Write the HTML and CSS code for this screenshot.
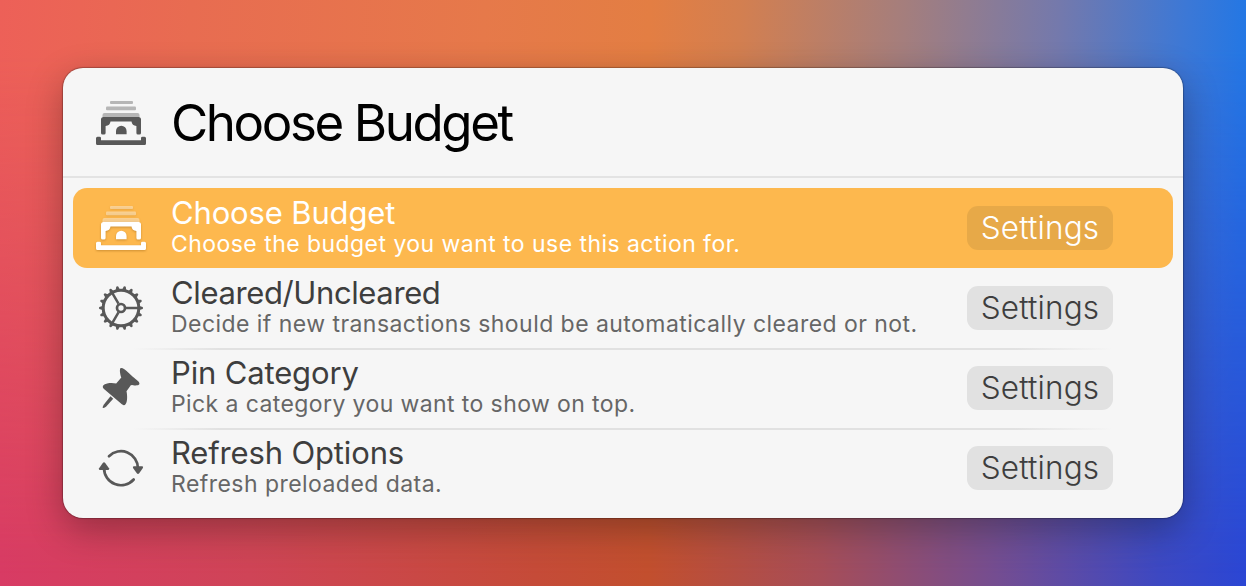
FILE: index.html
```html
<!DOCTYPE html>
<html lang="en">
<head>
<meta charset="utf-8">
<title>Choose Budget</title>
<link rel="stylesheet" href="styles.css">
</head>
<body>
<svg class="symbols" aria-hidden="true">
  <symbol id="cash" viewBox="0 0 50 46">
    <rect x="14" y="1" width="23" height="3" rx="1" opacity=".4"/>
    <rect x="10" y="6.5" width="30" height="3.7" rx="1" opacity=".4"/>
    <path opacity=".4" d="M8.5 13H41.5Q43.5 13 43.5 15V17H6.5V15Q6.500 13 8.500 13Z"/>
    <path d="M7.500 17H42.500Q45 17 45 19.500V33Q45 34.600 43.400 34.600H42Q40.400 34.600 40.400 33V26Q36 25.500 35.500 21.500H14.500Q14 25.500 9.600 26V33Q9.600 34.600 8 34.600H6.600Q5 34.600 5 33V19.500Q5 17 7.500 17Z"/>
    <path d="M20 34.300V31A5.300 5.300 0 0 1 30.600 31V34.300Z"/>
    <path d="M1.500 36.700H3.500Q5 36.700 5 38V40.200H45V38Q45 36.700 46.500 36.700H48.500Q50 36.700 50 38.200V43.500Q50 45 48.500 45H1.500Q0 45 0 43.500V38.200Q0 36.700 1.500 36.700Z"/>
  </symbol>
  <symbol id="gear" viewBox="-25 -23 50 46">
    <g fill="none" stroke="currentColor">
      <circle r="17.800" stroke-width="3"/>
      <circle r="4" stroke-width="2.700"/>
      <path stroke-width="2.500" d="M5 0H17M-2.500 -4.330L-8.500 -14.720M-2.500 4.330L-8.500 14.720"/>
    </g>
    <g id="teeth">
      <path id="tooth" d="M18.500 -2.100L21.700 -1Q22.400 0 21.700 1L18.500 2.100Z"/>
      <use href="#tooth" transform="rotate(20)"/><use href="#tooth" transform="rotate(40)"/>
      <use href="#tooth" transform="rotate(60)"/><use href="#tooth" transform="rotate(80)"/>
      <use href="#tooth" transform="rotate(100)"/>
    </g>
    <use href="#teeth" transform="rotate(120)"/><use href="#teeth" transform="rotate(240)"/>
  </symbol>
  <symbol id="pin" viewBox="0 0 50 46">
    <path d="M24.500 3.200C26.200 2.500 29 4.500 32.500 7.800L36.500 11.500C40.800 15 44.300 17.200 43.300 19.300C42.500 21 37.500 20.400 35 20L30.500 26.200C31.500 31 31.400 36.500 29.700 39C28.300 41.100 26.500 40 24.700 38.300L7.700 23.700C6.300 22.300 6.300 20.600 8.800 19.300C12.500 17.500 17 17.700 20.200 18.500L25.300 12.500C24.300 10 23.200 4.200 24.500 3.200Z"/>
    <path d="M14.500 31.300L17.200 33.700L10 41.800Q7.500 43.500 6.800 43Q6.200 42.400 7.700 39.700Z"/>
  </symbol>
  <symbol id="refresh" viewBox="-25 -23 50 46">
    <g fill="none" stroke="currentColor" stroke-width="2.700" stroke-linecap="round">
      <path d="M-12 -11.800A16.900 16.900 0 0 1 16.900 0"/>
      <path d="M12.700 11.500A16.900 16.900 0 0 1 -16.900 0"/>
    </g>
    <path d="M12.800 -1.700H21.200Q22.600 -1.400 21.900 0L18.200 5.300Q17 6.600 15.800 5.300L12 0Q11.500 -1.400 12.800 -1.700Z"/>
    <path d="M-12.800 2H-21.200Q-22.600 1.700 -21.900 .3L-18.200 -5Q-17 -6.300 -15.800 -5L-12 .3Q-11.500 1.700 -12.800 2Z"/>
  </symbol>
</svg>
<main class="panel">
  <header class="search">
    <svg class="icon"><use href="#cash"/></svg>
    <h1 class="query">Choose Budget</h1>
  </header>
  <ul class="list">
    <li class="row selected">
      <svg class="icon"><use href="#cash"/></svg>
      <div class="copy"><div class="title">Choose Budget</div><div class="subtitle">Choose the budget you want to use this action for.</div></div>
      <span class="badge">Settings</span>
    </li>
    <li class="row">
      <svg class="icon"><use href="#gear"/></svg>
      <div class="copy"><div class="title tight">Cleared/Uncleared</div><div class="subtitle">Decide if new transactions should be automatically cleared or not.</div></div>
      <span class="badge">Settings</span>
    </li>
    <li class="row divided">
      <svg class="icon"><use href="#pin"/></svg>
      <div class="copy"><div class="title">Pin Category</div><div class="subtitle snug">Pick a category you want to show on top.</div></div>
      <span class="badge">Settings</span>
    </li>
    <li class="row divided">
      <svg class="icon"><use href="#refresh"/></svg>
      <div class="copy"><div class="title">Refresh Options</div><div class="subtitle">Refresh preloaded data.</div></div>
      <span class="badge">Settings</span>
    </li>
  </ul>
</main>
</body>
</html>
```
FILE: styles.css
```css
* { box-sizing: border-box; }
html, body { height: 100%; margin: 0; }
body {
  display: grid;
  place-items: center;
  overflow: hidden;
  isolation: isolate;
  font-family: Inter, "Liberation Sans", sans-serif;
  background: linear-gradient(90deg, #d83b64 0, #cf4457 20%, #c54b38 43%, #c24f2e 52%, #a64d58 66%, #744d91 80%, #3d48c2 93%, #2b46d4 100%);
}
body::before {
  content: "";
  position: absolute;
  inset: 0;
  z-index: -1;
  background: linear-gradient(93deg, #ed6058 0, #e86c51 15%, #e6794a 38%, #e37e43 51%, #d37f50 58%, #a47e7d 71%, #7479ac 83%, #3c78d6 93%, #2277e5 98%);
  mask-image: linear-gradient(180deg, #000 8%, transparent 98%);
}
.symbols { position: absolute; width: 0; height: 0; }
.panel {
  width: 1120px;
  height: 450px;
  border-radius: 20px;
  background: #f6f6f6;
  color: #3e3e3e;
  box-shadow: 0 0 1px 1px rgba(0,0,0,.25), 0 12px 36px rgba(0,0,0,.3);
}
.search {
  display: flex;
  align-items: center;
  gap: 25px;
  height: 110px;
  padding: 2px 33px 0;
  border-bottom: 2px solid #e3e3e3;
}
.icon { flex: none; width: 50px; height: 46px; fill: currentColor; color: #585858; }
.query { margin: 0; font-size: 51px; line-height: 60px; font-weight: 390; letter-spacing: -2.4px; color: #000; white-space: nowrap; }
.list { list-style: none; margin: 0; padding: 10px; }
.row {
  position: relative;
  display: flex;
  align-items: center;
  gap: 25px;
  height: 80px;
  padding: 0 60px 0 23px;
  border-radius: 14px;
}
.selected { background: #fdb84e; color: #fff; }
.selected .icon { color: #fff; filter: drop-shadow(0 1px 1px rgba(120,70,0,.35)); }
.divided::before {
  content: "";
  position: absolute;
  top: 0;
  left: 60px;
  right: 60px;
  height: 2px;
  background: linear-gradient(90deg, transparent, #e1e1e1 9%, #e1e1e1 90%, transparent);
}
.copy { flex: 1; padding-bottom: 2px; white-space: nowrap; }
.title { font-size: 31px; line-height: 34px; letter-spacing: -.15px; }
.title.tight { letter-spacing: -.38px; }
.subtitle { font-size: 23px; line-height: 28px; color: #666; letter-spacing: .45px; }
.subtitle.snug { letter-spacing: .4px; }
.selected .subtitle { color: #fff; }
.badge {
  display: grid;
  place-items: center;
  width: 146px;
  height: 44px;
  padding-bottom: 2px;
  border-radius: 11px;
  background: #e1e1e1;
  font-size: 31.5px;
  font-weight: 300;
  letter-spacing: .15px;
}
.selected .badge { background: #e7a948; }
```
